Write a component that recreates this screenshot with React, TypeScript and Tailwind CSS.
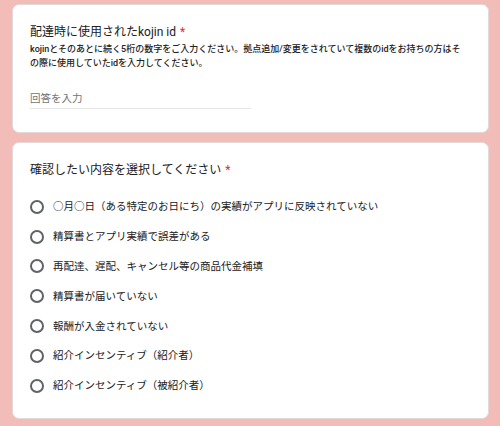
const options = [
  "○月○日（ある特定のお日にち）の実績がアプリに反映されていない",
  "精算書とアプリ実績で誤差がある",
  "再配達、遅配、キャンセル等の商品代金補填",
  "精算書が届いていない",
  "報酬が入金されていない",
  "紹介インセンティブ（紹介者）",
  "紹介インセンティブ（被紹介者）",
];

export default function App() {
  return (
    <div
      className="min-h-[426px] w-full bg-[#f2bdb9] pl-[12px] pr-[11px] pt-[4px] pb-[8px] flex flex-col gap-[9px] text-[#202124]"
      style={{ fontFamily: 'Roboto, "Noto Sans CJK JP", sans-serif' }}
    >
      {/* kojin id question */}
      <div className="bg-white rounded-[7px] border border-[#e3d9d8] px-[17px] pt-[18px] pb-[23px]">
        <div className="text-[12px] leading-[18px]">
          配達時に使用されたkojin id<span className="text-[#d93025] ml-[4px]">*</span>
        </div>
        <div className="text-[9px] leading-[14px] font-medium whitespace-nowrap mt-[1px]">
          kojinとそのあとに続く5桁の数字をご入力ください。拠点追加/変更をされていて複数のidをお持ちの方はそ
          <br />
          の際に使用していたidを入力してください。
        </div>
        <div className="mt-[21px] w-[221px] border-b border-[#e6e6e6] pb-[2px]">
          <div className="text-[10.5px] leading-[15px] text-[#70757a]">回答を入力</div>
        </div>
      </div>

      {/* choice question */}
      <div className="bg-white rounded-[7px] border border-[#e3d9d8] px-[17px] pt-[18px] pb-[17px]">
        <div className="text-[12px] leading-[18px] mb-[13px]">
          確認したい内容を選択してください<span className="text-[#d93025] ml-[4px]">*</span>
        </div>
        <div className="flex flex-col">
          {options.map((opt) => (
            <div key={opt} className="h-[29.8px] flex items-center gap-[9px]">
              <div className="w-[14px] h-[14px] rounded-full border-2 border-[#5f6368] shrink-0" />
              <span className="text-[10.5px] leading-[15px]">{opt}</span>
            </div>
          ))}
        </div>
      </div>
    </div>
  );
}
